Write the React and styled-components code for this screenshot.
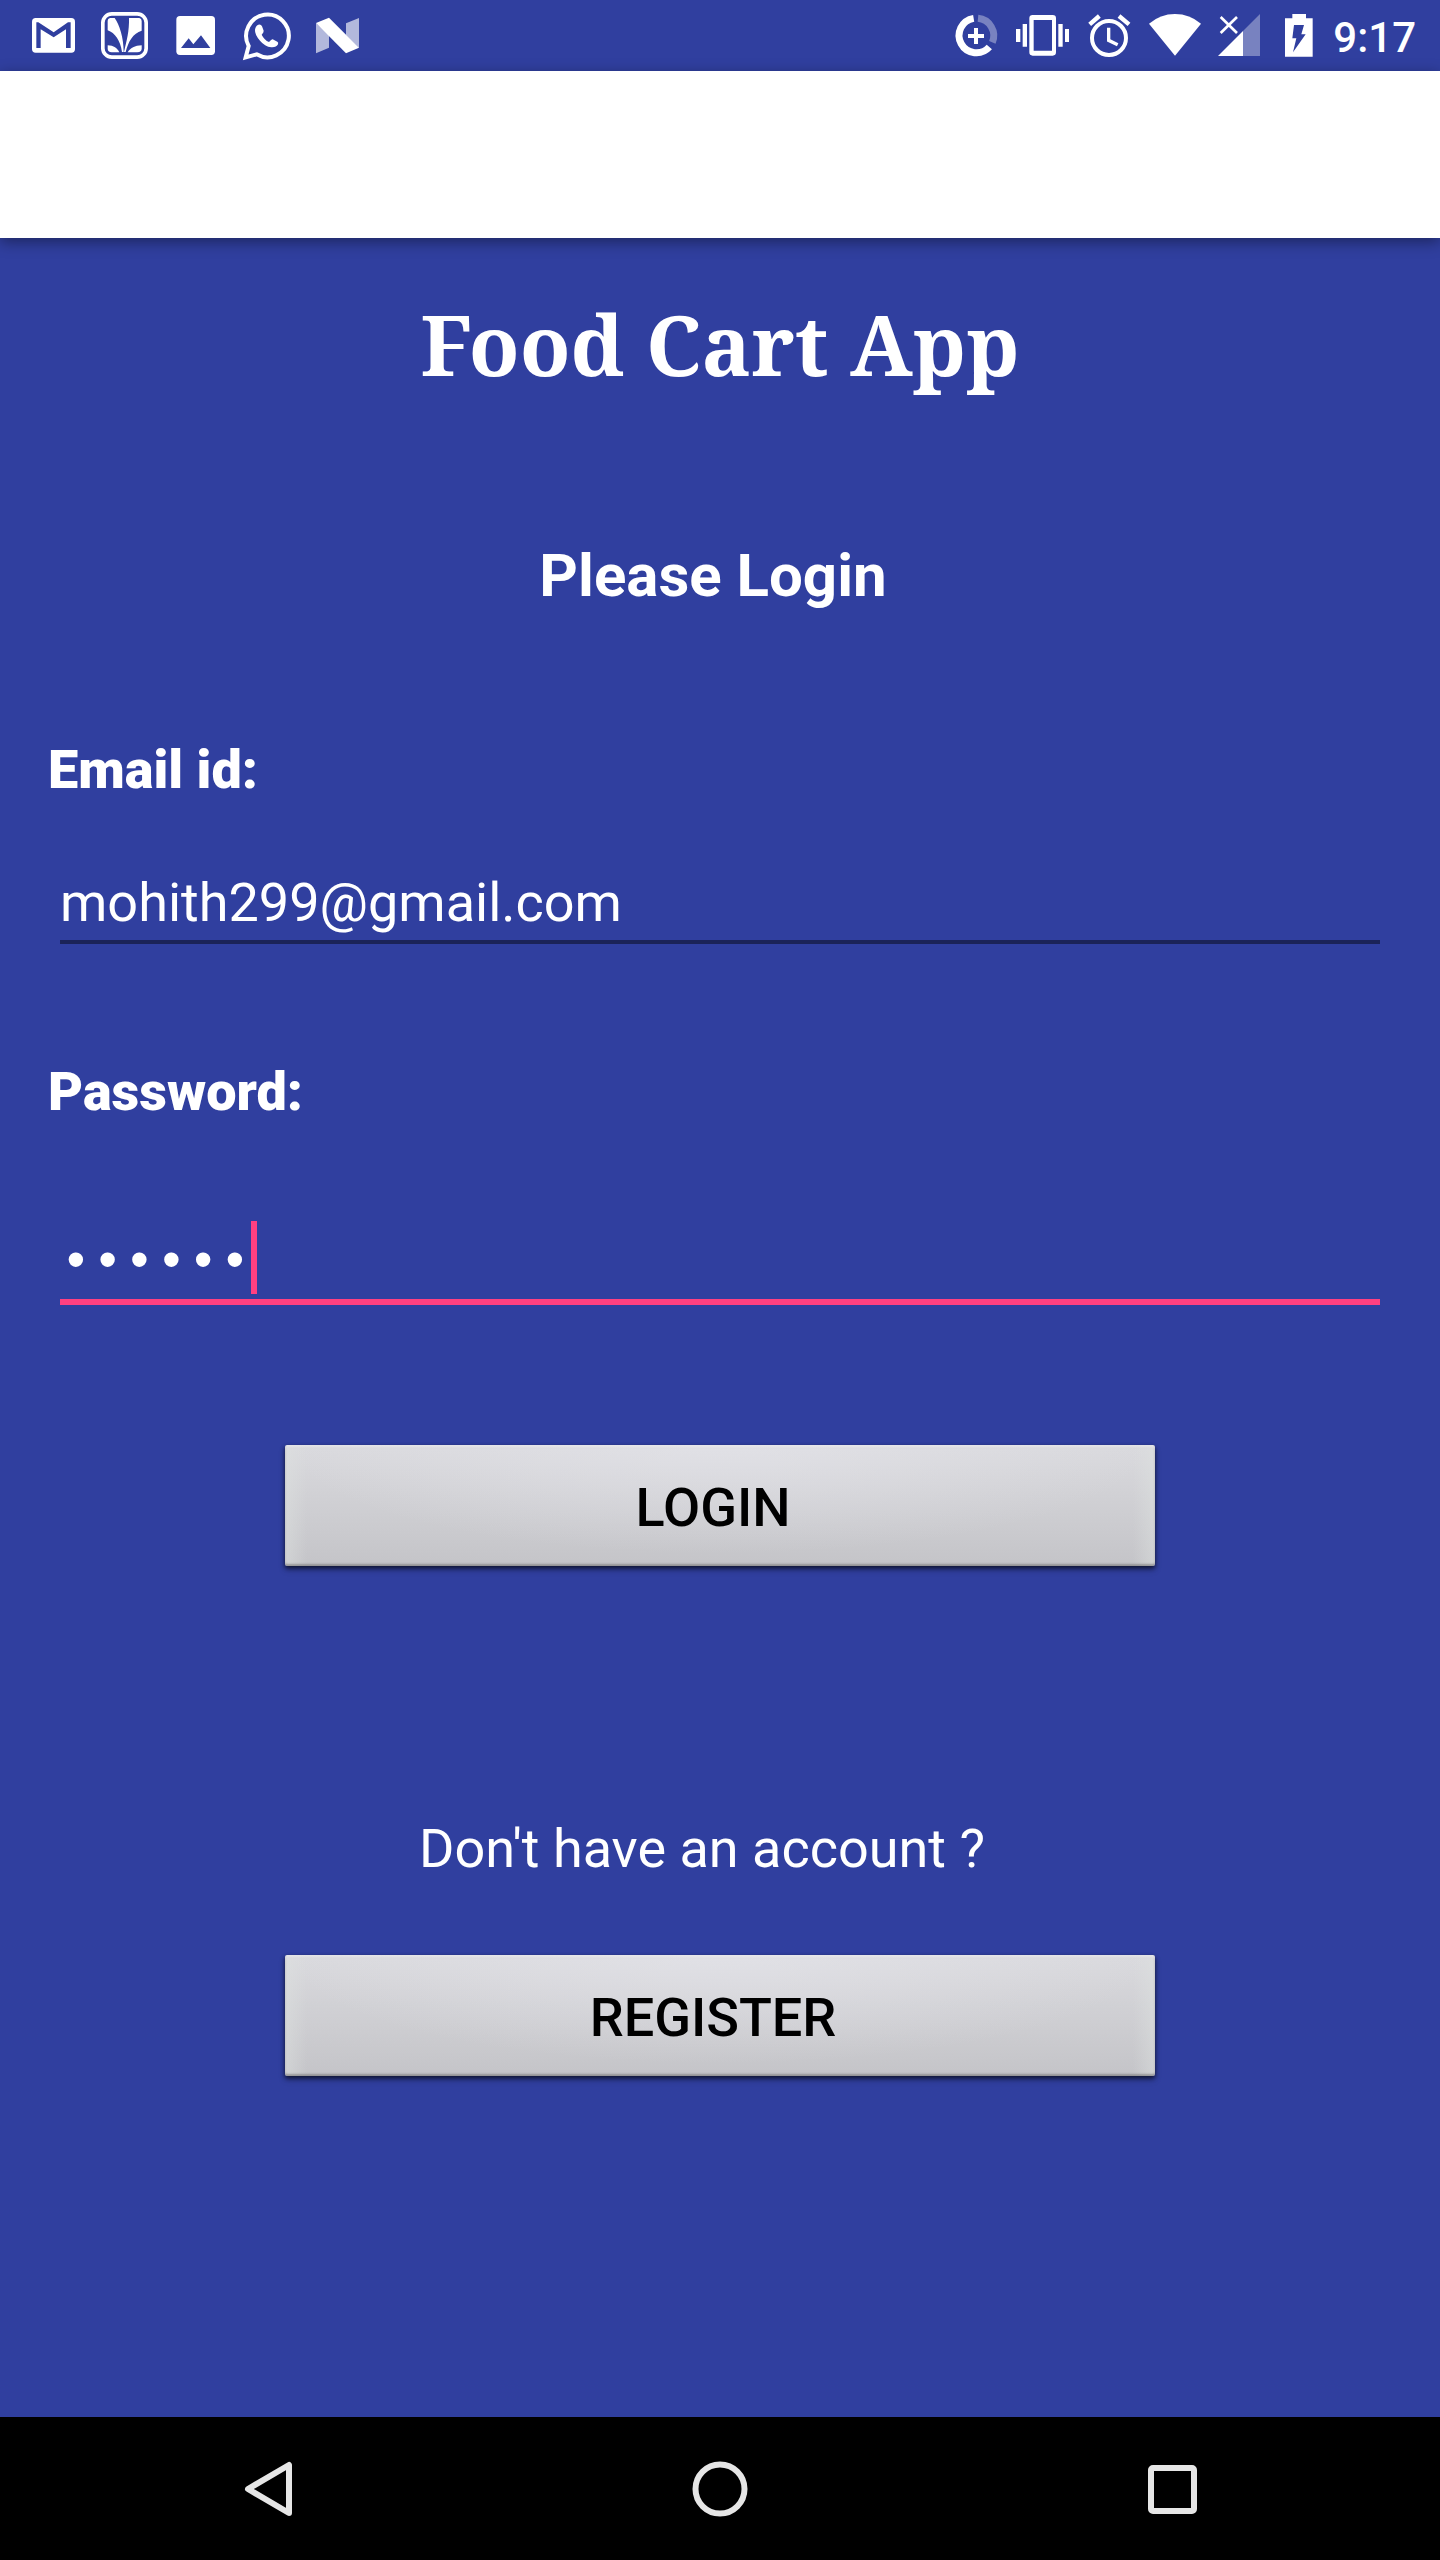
import React, { useState } from "react";
import styled, { createGlobalStyle } from "styled-components";

const indigo = "#303f9f";
const accent = "#ff4081";

const GlobalStyle = createGlobalStyle`
  *, *::before, *::after { box-sizing: border-box; }
  body { margin: 0; background: ${indigo}; }
  button, input { font: inherit; color: inherit; margin: 0; }
`;

const Screen = styled.div`
  display: flex;
  flex-direction: column;
  min-height: 100vh;
  background: ${indigo};
  color: #fff;
  font-family: Roboto, "Noto Sans", sans-serif;
  font-size: 54px;
  line-height: 64px;
`;

const StatusBar = styled.header`
  display: flex;
  justify-content: space-between;
  height: 71px;
  padding: 0 24px 0 18px;
`;

const StatusGroup = styled.div`
  display: flex;
  align-items: center;
`;

const StatusIcon = styled.svg`
  display: block;
  flex: none;
  width: ${(p) => p.$width}px;
  height: 71px;
`;

const Clock = styled.time`
  padding: 4px 0 0 6px;
  font-size: 42px;
  font-weight: 500;
`;

const Toolbar = styled.div`
  position: relative;
  height: 167px;
  background: #fff;
  box-shadow: 0 4px 14px rgba(0, 0, 0, 0.4);
`;

const Content = styled.main`
  flex: 1;
  padding: 50px 48px;
`;

const Title = styled.h1`
  margin: 0;
  font-family: "Noto Serif", "DejaVu Serif Condensed", serif;
  font-size: 83px;
  font-weight: 700;
  line-height: 112px;
  text-align: center;
`;

const Subtitle = styled.h2`
  margin: 140px 0 0;
  padding-right: 14px;
  font-size: 60px;
  font-weight: 700;
  line-height: 72px;
  text-align: center;
`;

const Form = styled.form`
  display: flex;
  flex-direction: column;
`;

const Field = styled.div`
  display: flex;
  flex-direction: column;
  gap: ${(p) => p.$gap}px;
  margin-top: ${(p) => p.$top}px;
`;

const Label = styled.label`
  font-weight: 900;
`;

const InputBox = styled.div`
  position: relative;
  display: flex;
  margin: 0 12px;
`;

const Input = styled.input`
  flex: 1;
  min-width: 0;
  height: ${(p) => (p.$active ? 93 : 74)}px;
  padding: ${(p) => (p.$active ? "16px 0 0" : "0 0 6px")};
  border: 0;
  border-bottom: ${(p) => (p.$active ? `6px solid ${accent}` : "4px solid #1b2358")};
  border-radius: 0;
  outline: none;
  background: transparent;
  caret-color: transparent;
  font-family: ${(p) => (p.$active ? '"Liberation Mono", monospace' : "inherit")};
  font-size: ${(p) => (p.$active ? 53 : 54)}px;
`;

const Caret = styled.span`
  position: absolute;
  left: 191px;
  bottom: 11px;
  width: 6px;
  height: 73px;
  background: ${accent};
`;

const PlateButton = styled.button`
  align-self: center;
  width: 100%;
  max-width: 870px;
  height: 121px;
  margin-top: ${(p) => p.$top}px;
  padding: 4px 14px 0 0;
  border: 0;
  border-radius: 2px;
  background:
    linear-gradient(90deg, rgba(222, 226, 224, 0.5), transparent 22px, transparent calc(100% - 22px), rgba(222, 226, 224, 0.5)),
    radial-gradient(ellipse 50% 90% at 50% 0, rgba(232, 232, 238, 0.5), transparent),
    linear-gradient(#dadade, #c4c4c8);
  box-shadow:
    inset 0 2px 2px rgba(236, 236, 240, 0.5),
    inset 0 -2px 2px rgba(100, 100, 100, 0.5),
    0 2px 4px rgba(0, 0, 0, 0.6),
    0 4px 6px rgba(0, 0, 0, 0.25);
  color: #000;
  font-weight: 500;
  text-transform: uppercase;
`;

const Hint = styled.p`
  margin: 251px 0 0;
  padding-right: 36px;
  text-align: center;
`;

const NavBar = styled.nav`
  display: flex;
  height: 143px;
  padding: 0 42px;
  background: #000;
`;

const NavButton = styled.button`
  display: flex;
  flex: 1;
  align-items: center;
  justify-content: center;
  padding: 0;
  border: 0;
  background: none;
`;

const NavIcon = styled.svg`
  width: 64px;
  height: 64px;
  fill: none;
  stroke: #e6e6e6;
  stroke-width: 6;
`;

const notifications = [
  {
    name: "Gmail",
    art: (
      <>
        <rect x="42" y="54" width="129" height="104" rx="11" />
        <path fill={indigo} d="M55 67h6l46 30 43-30h8v77h-14V88l-37 24-39-24v56H55z" />
      </>
    ),
  },
  {
    name: "Music",
    art: (
      <>
        <rect x="41.5" y="41.5" width="130" height="130" rx="27" fill="none" stroke="#fff" strokeWidth="11" />
        <path d="M56 62q0-6 7-8h14C91 74 104 112 104 156h-5C94 122 78 98 56 91z" />
        <path d="M120 54h31q7 2 7 9v29c-26 8-40 32-48 64h-5c8-34 16-62 15-102z" />
        <path d="M56 136c18 0 29 9 35 21H68q-12-1-12-11z" />
        <path d="M158 136c-20 0-35 9-42 21h29q13-1 13-11z" />
      </>
    ),
  },
  {
    name: "Picture",
    art: (
      <>
        <rect x="49" y="48" width="116" height="117" rx="11" />
        <path fill={indigo} d="M63 144l23-29 14 18 23-27 28 38z" />
      </>
    ),
  },
  {
    name: "WhatsApp",
    art: (
      <>
        <path fill="none" stroke="#fff" strokeWidth="12" d="M44 172l9-34A64 64 0 1 1 77 163z" />
        <path d="M82 74q8-2 11 5l5 13q1 4-6 12 8 16 22 22 8-9 11-8l14 7q4 2 2 8-5 10-20 9-20-3-34-20-16-18-15-32 1-12 10-16z" />
      </>
    ),
  },
  {
    name: "Android N",
    art: (
      <>
        <path opacity=".63" d="M42 69v91l39-17V105zM132 70l39-16v90l-39-38z" />
        <path d="M42 69l39-16 90 90-39 17z" />
      </>
    ),
  },
];

const indicators = [
  {
    name: "Data saver",
    width: 62,
    art: (
      <>
        <g fill="none" stroke="#fff" strokeWidth="21">
          <path d="M86 55A52 52 0 1 0 133 141" />
          <path opacity=".35" d="M99 55A52 52 0 0 1 142 127" />
        </g>
        <path d="M87 84h12v18h18v12H99v18H87v-18H69v-12h18z" />
      </>
    ),
  },
  {
    name: "Vibrate",
    width: 72,
    art: (
      <>
        <path fillRule="evenodd" d="M77 45h60q10 0 10 10v102q0 10-10 10H77q-10 0-10-10V55q0-10 10-10zm3 15v92h55V60z" />
        <path d="M47 72h13v68H47zM27 87h13v39H27zM154 72h13v68h-13zM174 87h12v39h-12z" />
      </>
    ),
  },
  {
    name: "Alarm",
    width: 60,
    art: (
      <g fill="none" stroke="#fff" strokeWidth="12">
        <circle cx="90" cy="114" r="51" />
        <path strokeWidth="10" d="M89 83v38l27 13" />
        <path strokeWidth="13" d="M32 73l29-25M120 48l30 25" />
      </g>
    ),
  },
  {
    name: "Wifi",
    width: 70,
    art: <path d="M108 167L30 71q34-29 78-29t78 29z" />,
  },
  {
    name: "No signal",
    width: 62,
    art: (
      <>
        <path opacity=".35" d="M102 93l51-51v126h-51z" />
        <path d="M102 93v75H27z" />
        <path fill="none" stroke="#fff" strokeWidth="8" d="M35 51l49 48M84 51L35 99" />
      </>
    ),
  },
  {
    name: "Battery charging",
    width: 56,
    art: (
      <>
        <path d="M64 42h41v13h20v115H42V55h22z" />
        <path fill={indigo} d="M69 75h30l-8 28h13l-38 54 10-42H64z" />
      </>
    ),
  },
];

const navItems = [
  { name: "Back", art: <path strokeLinejoin="round" d="M53 8v48L12 32z" /> },
  { name: "Home", art: <circle cx="32" cy="32" r="24.5" /> },
  { name: "Recent apps", art: <rect x="11" y="11" width="43" height="43" rx="2" /> },
];

function StatusIcons({ items }) {
  return items.map(({ name, width = 71, art }) => (
    <StatusIcon key={name} $width={width} viewBox={`0 0 ${width * 3} 213`} fill="#fff" role="img" aria-label={name}>
      {art}
    </StatusIcon>
  ));
}

export default function App() {
  const [email, setEmail] = useState("mohith299@gmail.com");
  const [password, setPassword] = useState("123456");

  return (
    <Screen>
      <GlobalStyle />
      <StatusBar>
        <StatusGroup>
          <StatusIcons items={notifications} />
        </StatusGroup>
        <StatusGroup>
          <StatusIcons items={indicators} />
          <Clock>9:17</Clock>
        </StatusGroup>
      </StatusBar>
      <Toolbar />
      <Content>
        <Title>Food Cart App</Title>
        <Subtitle>Please Login</Subtitle>
        <Form onSubmit={(e) => e.preventDefault()}>
          <Field $top={126} $gap={68}>
            <Label htmlFor="email">Email id:</Label>
            <InputBox>
              <Input id="email" type="email" value={email} onChange={(e) => setEmail(e.target.value)} />
            </InputBox>
          </Field>
          <Field $top={116} $gap={88}>
            <Label htmlFor="password">Password:</Label>
            <InputBox>
              <Input
                $active
                id="password"
                type="password"
                value={password}
                onChange={(e) => setPassword(e.target.value)}
              />
              <Caret />
            </InputBox>
          </Field>
          <PlateButton type="submit" $top={140}>Login</PlateButton>
          <Hint>Don't have an account ?</Hint>
          <PlateButton type="button" $top={74}>Register</PlateButton>
        </Form>
      </Content>
      <NavBar>
        {navItems.map(({ name, art }) => (
          <NavButton key={name} type="button" aria-label={name}>
            <NavIcon viewBox="0 0 64 64">{art}</NavIcon>
          </NavButton>
        ))}
      </NavBar>
    </Screen>
  );
}
